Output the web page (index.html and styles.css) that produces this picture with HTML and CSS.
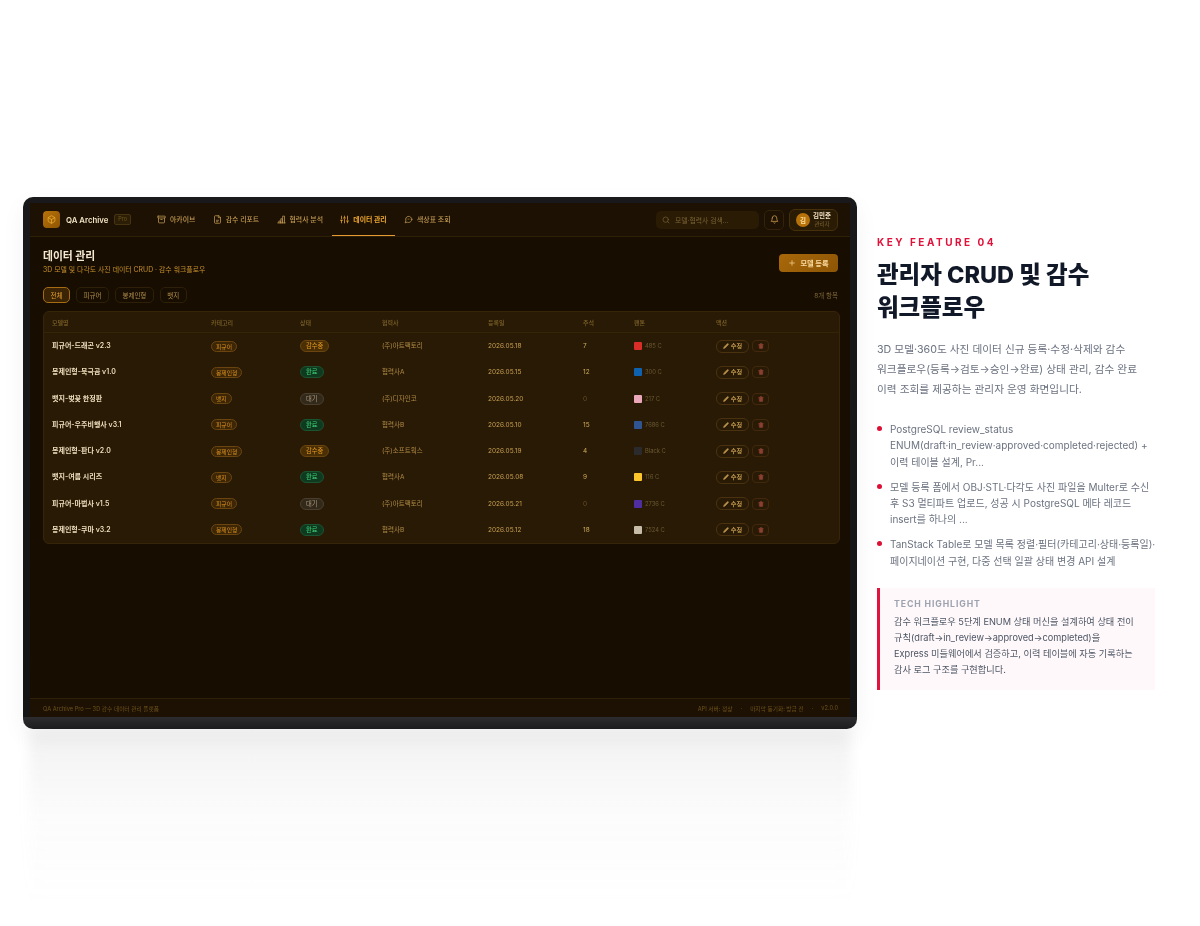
FILE: index.html
```html
<!DOCTYPE html>
<html lang="ko">
<head>
    <meta charset="UTF-8">
    <title>QA Archive - Key Feature 04</title>
    <link rel="stylesheet" href="styles.css">
</head>
<body>
    <svg class="sprite" xmlns="http://www.w3.org/2000/svg">
        <symbol id="i-box" viewBox="0 0 24 24"><path d="M21 8a2 2 0 0 0-1-1.7l-7-4a2 2 0 0 0-2 0l-7 4A2 2 0 0 0 3 8v8a2 2 0 0 0 1 1.7l7 4a2 2 0 0 0 2 0l7-4a2 2 0 0 0 1-1.7z"/><path d="M3.3 7 12 12l8.7-5"/><path d="M12 22V12"/></symbol>
        <symbol id="i-archive" viewBox="0 0 24 24"><rect x="2" y="3" width="20" height="5" rx="1"/><path d="M4 8v11a2 2 0 0 0 2 2h12a2 2 0 0 0 2-2V8"/><path d="M10 12h4"/></symbol>
        <symbol id="i-file" viewBox="0 0 24 24"><path d="M15 2H6a2 2 0 0 0-2 2v16a2 2 0 0 0 2 2h12a2 2 0 0 0 2-2V7z"/><path d="M14 2v5h6"/><path d="M9 14h6M9 18h4"/></symbol>
        <symbol id="i-chart" viewBox="0 0 24 24"><path d="M2 21h20"/><path d="M5 21v-5h4v5M10 21V10h4v11M15 21V3h5v18"/></symbol>
        <symbol id="i-sliders" viewBox="0 0 24 24"><path d="M4 21v-7M4 10V3M12 21v-9M12 8V3M20 21v-5M20 12V3M1 14h6M9 8h6M17 16h6"/></symbol>
        <symbol id="i-palette" viewBox="0 0 24 24"><path d="M21 11.500a8.400 8.400 0 0 1-9 8.400 8.500 8.500 0 0 1-3.800-.9L3 21l1.900-5.700A8.400 8.400 0 1 1 21 11.500z"/><path d="M8 11h.01M12 11h.01M16 11h.01"/></symbol>
        <symbol id="i-search" viewBox="0 0 24 24"><circle cx="11" cy="11" r="8"/><path d="m21 21-4.300-4.300"/></symbol>
        <symbol id="i-bell" viewBox="0 0 24 24"><path d="M6 8a6 6 0 0 1 12 0c0 7 3 9 3 9H3s3-2 3-9"/><path d="M10.300 21a1.900 1.900 0 0 0 3.400 0"/></symbol>
        <symbol id="i-plus" viewBox="0 0 24 24"><path d="M5 12h14M12 5v14"/></symbol>
        <symbol id="i-pencil" viewBox="0 0 24 24"><path d="M17 3a2.800 2.800 0 0 1 4 4L7.500 20.500 2 22l1.500-5.500z"/></symbol>
        <symbol id="i-trash" viewBox="0 0 24 24"><path d="M3 6h18M8 6V4a2 2 0 0 1 2-2h4a2 2 0 0 1 2 2v2"/><path d="M5 6h14v14a2 2 0 0 1-2 2H7a2 2 0 0 1-2-2z"/></symbol>
    </svg>

    <div class="page">
        <div class="device">
            <div class="screen">
                <header class="topbar">
                    <div class="brand">
                        <span class="logo"><svg class="icon"><use href="#i-box"/></svg></span>
                        <span class="brand-name">QA Archive</span>
                        <span class="brand-tag">Pro</span>
                    </div>
                    <nav class="nav">
                        <a class="nav-item"><svg class="icon"><use href="#i-archive"/></svg>아카이브</a>
                        <a class="nav-item"><svg class="icon"><use href="#i-file"/></svg>감수 리포트</a>
                        <a class="nav-item"><svg class="icon"><use href="#i-chart"/></svg>협력사 분석</a>
                        <a class="nav-item active"><svg class="icon"><use href="#i-sliders"/></svg>데이터 관리</a>
                        <a class="nav-item"><svg class="icon"><use href="#i-palette"/></svg>색상표 조회</a>
                    </nav>
                    <div class="top-tools">
                        <div class="search"><svg class="icon"><use href="#i-search"/></svg>모델·협력사 검색...</div>
                        <div class="bell"><svg class="icon"><use href="#i-bell"/></svg></div>
                        <div class="user">
                            <span class="avatar">김</span>
                            <span class="user-text"><b>김민준</b><small>관리자</small></span>
                        </div>
                    </div>
                </header>

                <main class="content">
                    <div class="content-head">
                        <div>
                            <h2>데이터 관리</h2>
                            <p>3D 모델 및 다각도 사진 데이터 CRUD · 감수 워크플로우</p>
                        </div>
                        <button class="add-btn"><svg class="icon"><use href="#i-plus"/></svg>모델 등록</button>
                    </div>

                    <div class="filters">
                        <span class="filter on">전체</span>
                        <span class="filter">피규어</span>
                        <span class="filter">봉제인형</span>
                        <span class="filter">뱃지</span>
                        <span class="item-count">8개 항목</span>
                    </div>

                    <table class="models">
                        <colgroup>
                            <col class="c-name"><col class="c-cat"><col class="c-status"><col class="c-partner">
                            <col class="c-date"><col class="c-count"><col class="c-pantone"><col class="c-action">
                        </colgroup>
                        <thead>
                            <tr><th>모델명</th><th>카테고리</th><th>상태</th><th>협력사</th><th>등록일</th><th>주석</th><th>팬톤</th><th>액션</th></tr>
                        </thead>
                        <tbody>
                            <tr>
                                <td class="name">피규어-드래곤 v2.3</td><td><span class="cat">피규어</span></td><td><span class="st review">감수중</span></td><td class="partner">(주)아트팩토리</td><td class="date">2026.05.18</td><td class="count">7</td>
                                <td><span class="pantone"><i class="swatch s-red"></i>485 C</span></td>
                                <td><span class="actions"><span class="edit"><svg class="icon"><use href="#i-pencil"/></svg>수정</span><span class="del"><svg class="icon"><use href="#i-trash"/></svg></span></span></td>
                            </tr>
                            <tr>
                                <td class="name">봉제인형-북극곰 v1.0</td><td><span class="cat">봉제인형</span></td><td><span class="st done">완료</span></td><td class="partner">협력사A</td><td class="date">2026.05.15</td><td class="count">12</td>
                                <td><span class="pantone"><i class="swatch s-blue"></i>300 C</span></td>
                                <td><span class="actions"><span class="edit"><svg class="icon"><use href="#i-pencil"/></svg>수정</span><span class="del"><svg class="icon"><use href="#i-trash"/></svg></span></span></td>
                            </tr>
                            <tr>
                                <td class="name">뱃지-벚꽃 한정판</td><td><span class="cat">뱃지</span></td><td><span class="st wait">대기</span></td><td class="partner">(주)디자인코</td><td class="date">2026.05.20</td><td class="count zero">0</td>
                                <td><span class="pantone"><i class="swatch s-pink"></i>217 C</span></td>
                                <td><span class="actions"><span class="edit"><svg class="icon"><use href="#i-pencil"/></svg>수정</span><span class="del"><svg class="icon"><use href="#i-trash"/></svg></span></span></td>
                            </tr>
                            <tr>
                                <td class="name">피규어-우주비행사 v3.1</td><td><span class="cat">피규어</span></td><td><span class="st done">완료</span></td><td class="partner">협력사B</td><td class="date">2026.05.10</td><td class="count">15</td>
                                <td><span class="pantone"><i class="swatch s-navy"></i>7686 C</span></td>
                                <td><span class="actions"><span class="edit"><svg class="icon"><use href="#i-pencil"/></svg>수정</span><span class="del"><svg class="icon"><use href="#i-trash"/></svg></span></span></td>
                            </tr>
                            <tr>
                                <td class="name">봉제인형-판다 v2.0</td><td><span class="cat">봉제인형</span></td><td><span class="st review">감수중</span></td><td class="partner">(주)소프트웍스</td><td class="date">2026.05.19</td><td class="count">4</td>
                                <td><span class="pantone"><i class="swatch s-black"></i>Black C</span></td>
                                <td><span class="actions"><span class="edit"><svg class="icon"><use href="#i-pencil"/></svg>수정</span><span class="del"><svg class="icon"><use href="#i-trash"/></svg></span></span></td>
                            </tr>
                            <tr>
                                <td class="name">뱃지-여름 시리즈</td><td><span class="cat">뱃지</span></td><td><span class="st done">완료</span></td><td class="partner">협력사A</td><td class="date">2026.05.08</td><td class="count">9</td>
                                <td><span class="pantone"><i class="swatch s-yellow"></i>116 C</span></td>
                                <td><span class="actions"><span class="edit"><svg class="icon"><use href="#i-pencil"/></svg>수정</span><span class="del"><svg class="icon"><use href="#i-trash"/></svg></span></span></td>
                            </tr>
                            <tr>
                                <td class="name">피규어-마법사 v1.5</td><td><span class="cat">피규어</span></td><td><span class="st wait">대기</span></td><td class="partner">(주)아트팩토리</td><td class="date">2026.05.21</td><td class="count zero">0</td>
                                <td><span class="pantone"><i class="swatch s-purple"></i>2736 C</span></td>
                                <td><span class="actions"><span class="edit"><svg class="icon"><use href="#i-pencil"/></svg>수정</span><span class="del"><svg class="icon"><use href="#i-trash"/></svg></span></span></td>
                            </tr>
                            <tr>
                                <td class="name">봉제인형-쿠마 v3.2</td><td><span class="cat">봉제인형</span></td><td><span class="st done">완료</span></td><td class="partner">협력사B</td><td class="date">2026.05.12</td><td class="count">18</td>
                                <td><span class="pantone"><i class="swatch s-beige"></i>7524 C</span></td>
                                <td><span class="actions"><span class="edit"><svg class="icon"><use href="#i-pencil"/></svg>수정</span><span class="del"><svg class="icon"><use href="#i-trash"/></svg></span></span></td>
                            </tr>
                        </tbody>
                    </table>
                </main>

                <footer class="statusbar">
                    <span>QA Archive Pro — 3D 감수 데이터 관리 플랫폼</span>
                    <span class="status-right"><span>API 서버: 정상</span><span>·</span><span>마지막 동기화: 방금 전</span><span>·</span><span>v2.0.0</span></span>
                </footer>
            </div>
        </div>

        <aside class="side">
            <div class="eyebrow">KEY FEATURE 04</div>
            <h1>관리자 CRUD 및 감수 워크플로우</h1>
            <p class="lead">3D 모델·360도 사진 데이터 신규 등록·수정·삭제와 감수 워크플로우(등록→검토→승인→완료) 상태 관리, 감수 완료 이력 조회를 제공하는 관리자 운영 화면입니다.</p>
            <ul class="points">
                <li>PostgreSQL review_status ENUM(draft·in_review·approved·completed·rejected) + 이력 테이블 설계, Pr...</li>
                <li>모델 등록 폼에서 OBJ·STL·다각도 사진 파일을 Multer로 수신 후 S3 멀티파트 업로드, 성공 시 PostgreSQL 메타 레코드 insert를 하나의 ...</li>
                <li>TanStack Table로 모델 목록 정렬·필터(카테고리·상태·등록일)· 페이지네이션 구현, 다중 선택 일괄 상태 변경 API 설계</li>
            </ul>
            <div class="highlight">
                <div class="highlight-label">TECH HIGHLIGHT</div>
                <p>감수 워크플로우 5단계 ENUM 상태 머신을 설계하여 상태 전이 규칙(draft→in_review→approved→completed)을 Express 미들웨어에서 검증하고, 이력 테이블에 자동 기록하는 감사 로그 구조를 구현합니다.</p>
            </div>
        </aside>
    </div>
</body>
</html>
```

FILE: styles.css
```css
* {
    box-sizing: border-box;
}
html, body {
    margin: 0;
    height: 100%;
}
body {
    background-color: #ffffff;
    font-family: Inter, "Noto Sans CJK KR", sans-serif;
    overflow: hidden;
}
.sprite {
    display: none;
}
.icon {
    fill: none;
    stroke: currentColor;
    stroke-width: 2;
    stroke-linecap: round;
    stroke-linejoin: round;
    flex: none;
}
.page {
    height: 926px;
    display: flex;
    align-items: center;
    gap: 20px;
    padding-left: 23px;
}

/* device */
.device {
    position: relative;
    width: 834px;
    height: 532px;
    flex: none;
    padding: 6px 7px 12px;
    border-radius: 10px;
    background: linear-gradient(to bottom, #19191b 0%, #141415 97.700%, #2c2c2e 97.800%, #1c1c1e 100%);
    box-shadow: 0 8px 24px rgba(0,0,0,0.05);
}
/* soft reflection under the laptop */
.device::after {
    content: "";
    position: absolute;
    left: 6px;
    right: 6px;
    top: 100%;
    height: 175px;
    background: linear-gradient(to bottom, rgba(110,110,110,0.09), rgba(190,165,165,0.035) 50%, rgba(255,235,235,0));
    filter: blur(6px);
    z-index: -1;
}
.screen {
    height: 100%;
    display: flex;
    flex-direction: column;
    background-color: #170e01;
    color: #c8a050;
    filter: blur(0.4px);
}

/* top bar */
.topbar {
    height: 34px;
    flex: none;
    display: flex;
    align-items: center;
    padding: 0 12px 0 13px;
    background-color: #1c1103;
    border-bottom: 1px solid #2e1f08;
}
.brand {
    display: flex;
    align-items: center;
    width: 106px;
    flex: none;
}
.logo {
    width: 17px;
    height: 17px;
    border-radius: 4px;
    display: flex;
    align-items: center;
    justify-content: center;
    background: linear-gradient(135deg, #b8720a, #8f5504);
    color: #f0b030;
}
.logo .icon {
    width: 9px;
    height: 9px;
}
.brand-name {
    margin-left: 6px;
    font-size: 7.800px;
    font-weight: 600;
    color: #f3e4c4;
}
.brand-tag {
    margin-left: 6px;
    padding: 1px 3px;
    font-size: 5.500px;
    line-height: 7px;
    color: #6f5518;
    background-color: #2c1e06;
    border: 1px solid #46330f;
    border-radius: 2px;
}
.nav {
    display: flex;
    gap: 1.300px;
    height: 33px;
}
.nav-item {
    display: flex;
    align-items: center;
    gap: 4px;
    padding: 0 8px;
    font-size: 6.900px;
    font-weight: 500;
    color: #c39a52;
    border-bottom: 1px solid transparent;
}
.nav-item .icon {
    width: 9px;
    height: 9px;
}
.nav-item.active {
    color: #f0a830;
    font-weight: 700;
    border-bottom-color: #e59a34;
}
.top-tools {
    margin-left: auto;
    display: flex;
    align-items: center;
}
.search {
    width: 103px;
    height: 18px;
    display: flex;
    align-items: center;
    gap: 5px;
    padding-left: 6px;
    border-radius: 5px;
    background-color: #2a1b05;
    font-size: 6.800px;
    color: #7c6434;
}
.search .icon {
    width: 8px;
    height: 8px;
}
.bell {
    width: 20px;
    height: 20px;
    margin-left: 5px;
    display: flex;
    align-items: center;
    justify-content: center;
    border: 1px solid #33230a;
    border-radius: 5px;
    color: #d0a050;
}
.bell .icon {
    width: 9px;
    height: 9px;
}
.user {
    width: 49px;
    height: 22px;
    margin-left: 5px;
    display: flex;
    align-items: center;
    gap: 3px;
    padding-left: 6px;
    border: 1px solid #46300c;
    border-radius: 6px;
    background-color: #2a1b05;
}
.avatar {
    width: 14px;
    height: 14px;
    border-radius: 50%;
    flex: none;
    display: flex;
    align-items: center;
    justify-content: center;
    background: #b8720a;
    color: #ffe0a0;
    font-size: 6.500px;
    font-weight: 700;
}
.user-text {
    display: flex;
    flex-direction: column;
    align-items: center;
}
.user-text b {
    font-size: 6.500px;
    line-height: 9px;
    color: #f3e4c4;
}
.user-text small {
    font-size: 5.500px;
    line-height: 7px;
    color: #7c6434;
}

/* content */
.content {
    flex: 1;
    padding: 15px 12px 0 13px;
}
.content-head {
    display: flex;
    justify-content: space-between;
    align-items: center;
    height: 21px;
}
.content-head h2 {
    margin: 0;
    font-size: 10.800px;
    line-height: 14px;
    font-weight: 700;
    color: #f6ead2;
}
.content-head p {
    margin: 0;
    font-size: 6.900px;
    line-height: 12px;
    color: #c8902c;
}
.add-btn {
    width: 59px;
    height: 18px;
    display: flex;
    align-items: center;
    justify-content: center;
    gap: 4px;
    padding: 0;
    border: none;
    border-radius: 4px;
    background: linear-gradient(135deg, #a9680a, #8c5505);
    color: #fbdca0;
    font-family: inherit;
    font-size: 7.200px;
    font-weight: 700;
}
.add-btn .icon {
    width: 8px;
    height: 8px;
}
.filters {
    display: flex;
    align-items: center;
    gap: 6px;
    margin-top: 14px;
}
.filter {
    height: 16px;
    display: flex;
    align-items: center;
    padding: 0 6.500px;
    border: 1px solid #2e2008;
    border-radius: 5px;
    font-size: 6.500px;
    color: #b08c4c;
}
.filter.on {
    color: #e8a030;
    background-color: #3a2405;
    border-color: #a56c14;
}
.item-count {
    margin-left: auto;
    font-size: 6.500px;
    color: #7c6434;
}

/* table */
.models {
    width: 100%;
    margin-top: 8px;
    table-layout: fixed;
    border-collapse: separate;
    border-spacing: 0;
    background-color: #291a05;
    border: 1px solid #362508;
    border-radius: 6px;
}
.c-name { width: 159px; }
.c-cat { width: 89px; }
.c-status { width: 82px; }
.c-partner { width: 106px; }
.c-date { width: 95px; }
.c-count { width: 51px; }
.c-pantone { width: 82px; }
.c-action { width: 131px; }
.models th {
    height: 21px;
    padding: 0 0 0 8px;
    text-align: left;
    font-size: 6px;
    font-weight: 500;
    color: #7d6228;
    border-bottom: 1px solid #352508;
}
.models td {
    height: 26.250px;
    padding: 0 0 0 8px;
    font-size: 6.500px;
    line-height: 10px;
    vertical-align: middle;
}
.models td.name {
    font-size: 7px;
    font-weight: 600;
    color: #efdfbe;
}
.partner {
    color: #b08a45;
}
.date {
    color: #c8a050;
}
.count {
    color: #cfab5c;
}
.count.zero {
    color: #66512a;
}
.cat, .st {
    display: inline-block;
    border: 1px solid;
    border-radius: 7px;
    white-space: nowrap;
}
.cat {
    padding: 0 4px;
    font-size: 5.800px;
    line-height: 9px;
    color: #d99020;
    background-color: #3d2605;
    border-color: #6b4510;
}
.st {
    padding: 0 5px;
    font-size: 6.300px;
    line-height: 10px;
}
.st.review {
    color: #e89a20;
    background-color: #4a2f05;
    border-color: #6b4510;
}
.st.done {
    color: #3ccf74;
    background-color: #0f3a20;
    border-color: #1a5430;
}
.st.wait {
    color: #a99a80;
    background-color: #33291a;
    border-color: #4a3f2f;
}
.pantone {
    display: flex;
    align-items: center;
    gap: 3px;
    font-size: 5.800px;
    color: #6b5a34;
}
.swatch {
    width: 8px;
    height: 8px;
    border-radius: 1px;
    flex: none;
}
.s-red { background-color: #d92d27; }
.s-blue { background-color: #0f62b0; }
.s-pink { background-color: #eaa7ba; }
.s-navy { background-color: #2f5490; }
.s-black { background-color: #2b2b2e; }
.s-yellow { background-color: #fcc52c; }
.s-purple { background-color: #4e2ea0; }
.s-beige { background-color: #c7bca8; }
.actions {
    display: flex;
    align-items: center;
    gap: 3px;
}
.edit {
    width: 33px;
    height: 13px;
    display: flex;
    align-items: center;
    justify-content: center;
    gap: 2px;
    border: 1px solid #4a3210;
    border-radius: 6px;
    font-size: 6.200px;
    font-weight: 600;
    color: #b8924a;
}
.edit .icon {
    width: 6px;
    height: 6px;
    fill: currentColor;
}
.del {
    width: 17px;
    height: 12px;
    display: flex;
    align-items: center;
    justify-content: center;
    border: 1px solid #42290e;
    border-radius: 4px;
    color: #8a4030;
}
.del .icon {
    width: 6px;
    height: 6px;
    fill: currentColor;
}

/* footer */
.statusbar {
    height: 19px;
    flex: none;
    display: flex;
    align-items: center;
    justify-content: space-between;
    padding: 0 12px 0 13px;
    background-color: #1c1103;
    border-top: 1px solid #2e1f08;
    font-size: 5.700px;
    color: #6f521c;
}
.status-right {
    display: flex;
    gap: 8px;
}

/* right column */
.side {
    width: 278px;
    flex: none;
    word-break: keep-all;
    filter: blur(0.2px);
}
.eyebrow {
    font-size: 10px;
    line-height: 12px;
    font-weight: 700;
    letter-spacing: 2.500px;
    color: #e0123a;
}
.side h1 {
    margin: 10.500px 0 0;
    max-width: 240px;
    font-size: 23.500px;
    line-height: 33px;
    font-weight: 800;
    color: #111827;
}
.lead {
    margin: 15.500px 0 0;
    font-size: 10.700px;
    line-height: 20px;
    color: #6b7280;
}
.points {
    list-style: none;
    width: 282px;
    margin: 21px 0 0;
    padding: 0;
}
.points li {
    position: relative;
    padding-left: 13px;
    font-size: 10px;
    line-height: 16.400px;
    color: #6b7280;
    margin-bottom: 8.500px;
}
.points li::before {
    content: "";
    position: absolute;
    left: 0;
    top: 5px;
    width: 5px;
    height: 5px;
    border-radius: 50%;
    background-color: #dc0f35;
}
.highlight {
    margin-top: 19px;
    padding: 10px 18px 12px 14px;
    background-color: #fff8fa;
    border-left: 3px solid #e0153f;
}
.highlight-label {
    font-size: 8.700px;
    line-height: 12px;
    font-weight: 700;
    letter-spacing: 0.900px;
    color: #9ca3af;
}
.highlight p {
    margin: 4px 0 0;
    font-size: 9.200px;
    line-height: 16px;
    color: #4b5563;
}
```
